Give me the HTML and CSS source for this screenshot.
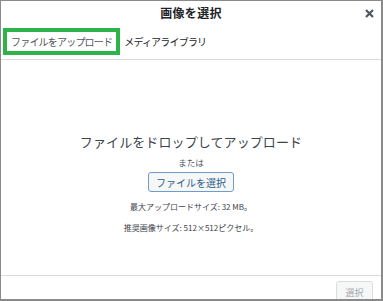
FILE: index.html
```html
<!DOCTYPE html>
<html lang="ja">
<head>
    <meta charset="UTF-8">
    <meta name="viewport" content="width=device-width, initial-scale=1.0">
    <title>画像を選択</title>
    <link rel="stylesheet" href="styles.css">
</head>
<body>
    <div class="modal">
        <div class="modal-header">
            <span></span>
            <h1 class="modal-title">画像を選択</h1>
            <span class="modal-close">
                <svg width="9" height="9" viewBox="0 0 9 9"><path d="M1 1 L8 8 M8 1 L1 8" stroke="#50575e" stroke-width="2.2"/></svg>
            </span>
        </div>
        <div class="tabs">
            <div class="tab tab-active">ファイルをアップロード</div>
            <div class="tab">メディアライブラリ</div>
        </div>
        <div class="upload">
            <p class="upload-title">ファイルをドロップしてアップロード</p>
            <p class="upload-or">または</p>
            <button class="btn-select">ファイルを選択</button>
            <p class="upload-info">最大アップロードサイズ: 32 MB。</p>
            <p class="upload-info">推奨画像サイズ: 512×512ピクセル。</p>
        </div>
        <div class="modal-footer">
            <button class="btn-choose" disabled>選択</button>
        </div>
    </div>
</body>
</html>
```

FILE: styles.css
```css
* {
    box-sizing: border-box;
}
body {
    margin: 0;
    font-family: "Noto Sans CJK JP", "Noto Sans", sans-serif;
    color: #1d2327;
    background-color: #fff;
}
.modal {
    width: 383px;
    height: 301px;
    border: 1px solid #8a8a8a;
    border-right-width: 2px;
    border-bottom-width: 2px;
    display: flex;
    flex-direction: column;
    overflow: hidden;
}
.modal-header {
    display: grid;
    grid-template-columns: 1fr auto 1fr;
    align-items: center;
    height: 24px;
}
.modal-title {
    margin: 0;
    font-size: 12px;
    font-weight: bold;
    line-height: 16px;
    letter-spacing: 0.3px;
}
.modal-close {
    justify-self: end;
    margin-right: 7px;
    display: flex;
}
.tabs {
    display: flex;
    align-items: center;
    height: 35px;
    padding: 0 0 1px 2px;
    border-bottom: 1px solid #dcdcde;
}
.tab {
    font-size: 10px;
    line-height: 19px;
    letter-spacing: -0.8px;
    padding: 0 4px;
}
.tab-active {
    border: 4px solid #2db34a;
    padding: 0 4px 0 4px;
    color: #50575e;
}
.upload {
    flex: 1;
    display: flex;
    flex-direction: column;
    align-items: center;
    padding-top: 72px;
}
.upload p {
    margin: 0;
}
.upload-title {
    font-size: 13px;
    line-height: 20px;
    letter-spacing: 0.1px;
    color: #3c434a;
}
.upload-or {
    font-size: 8.5px;
    line-height: 13px;
    margin-top: 4px !important;
    color: #50575e;
}
.btn-select {
    margin-top: 3px;
    margin-bottom: 4px;
    width: 86px;
    height: 20px;
    padding: 0;
    font-family: inherit;
    font-size: 10px;
    color: #2a5d8f;
    background-color: #f6f7f7;
    border: 1px solid #6f9ccb;
    border-radius: 3px;
}
.upload-info {
    font-size: 8px;
    line-height: 21px;
    color: #3c434a;
}
.modal-footer {
    height: 24px;
    border-top: 1px solid #dcdcde;
    display: flex;
    justify-content: flex-end;
    padding: 5px 8px 0 0;
}
.btn-choose {
    width: 37px;
    height: 22px;
    padding: 0;
    font-family: inherit;
    font-size: 9px;
    color: #a7aaad;
    background-color: #f6f7f7;
    border: 1px solid #dcdcde;
    border-radius: 3px;
}
```
